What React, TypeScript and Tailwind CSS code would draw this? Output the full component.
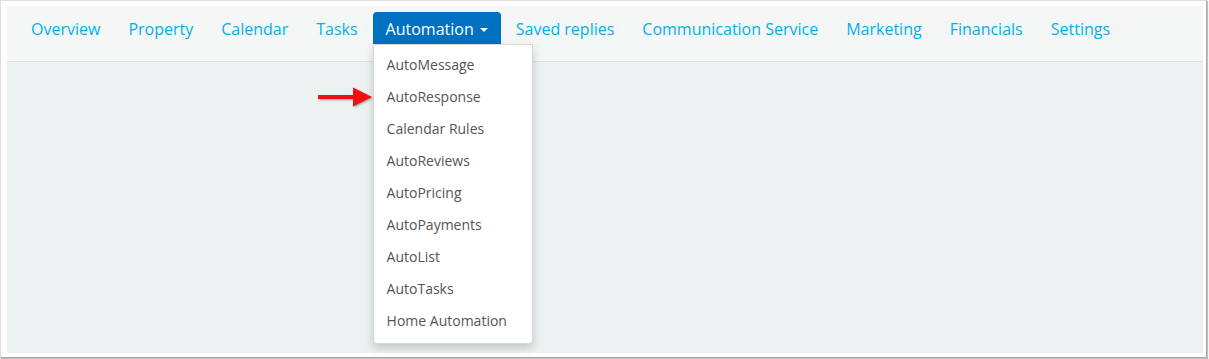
import { useState } from 'react';

const navItems = [
  'Overview',
  'Property',
  'Calendar',
  'Tasks',
  'Automation',
  'Saved replies',
  'Communication Service',
  'Marketing',
  'Financials',
  'Settings',
];

const automationItems = [
  'AutoMessage',
  'AutoResponse',
  'Calendar Rules',
  'AutoReviews',
  'AutoPricing',
  'AutoPayments',
  'AutoList',
  'AutoTasks',
  'Home Automation',
];

// Red callout arrow pointing at a menu entry
function CalloutArrow() {
  return (
    <svg width="58" height="24" viewBox="0 0 58 24" className="drop-shadow-[1px_1px_1px_rgba(0,0,0,0.35)]">
      <path d="M2 10 L37 10 L37 2.5 L56 12 L37 21.5 L37 14 L2 14 Z" fill="#f20f0f" strokeLinejoin="round" />
    </svg>
  );
}

export default function App() {
  const [open] = useState(true);

  return (
    <div className="flex h-[359px] w-[1209px] bg-white pr-[2px] pb-[1px] font-['Open_Sans',sans-serif]">
      <div className="flex flex-1 flex-col border border-[#dedede] border-r-[#a9a9a9] border-b-[#a9a9a9] bg-white pl-[6px] pt-[5px] pr-[3px] pb-[4px] shadow-[1px_1px_1px_rgba(0,0,0,0.25)]">
        <div className="flex flex-1 flex-col bg-[#ecf1f1]">
          {/* Top navigation */}
          <nav className="h-[56px] border-b border-[#dbe1e1] bg-[#f5f7f7] pl-[11px] pt-[6px]">
            <ul className="flex gap-[2px]">
              {navItems.map((item) => {
                const active = item === 'Automation';
                return (
                  <li key={item} className="relative">
                    <a
                      className={
                        active
                          ? 'flex h-[32px] items-center gap-[6px] rounded-t-[4px] bg-[#0071c1] px-[13px] pt-[2px] text-[16px] text-white'
                          : 'flex h-[32px] items-center px-[13px] pt-[2px] text-[16px] text-[#05aef0]'
                      }
                    >
                      {item}
                      {active && (
                        <span className="mt-[1px] h-0 w-0 border-x-[4px] border-t-[4px] border-x-transparent border-t-white" />
                      )}
                    </a>
                    {active && open && (
                      <div className="absolute left-0 top-[32px] z-10 w-[160px]">
                        <ul className="rounded-b-[4px] border border-[#d6d9d9] bg-white pt-[3px] pb-[7px] shadow-[0_4px_10px_rgba(0,0,0,0.18)]">
                          {automationItems.map((sub) => (
                            <li key={sub} className="flex h-[32px] items-center px-[12px] pl-[13px] text-[14px] text-[#555555]">
                              {sub}
                            </li>
                          ))}
                        </ul>
                        <div className="absolute left-[-57px] top-[41px]">
                          <CalloutArrow />
                        </div>
                      </div>
                    )}
                  </li>
                );
              })}
            </ul>
          </nav>
          <div className="flex-1" />
        </div>
      </div>
    </div>
  );
}
